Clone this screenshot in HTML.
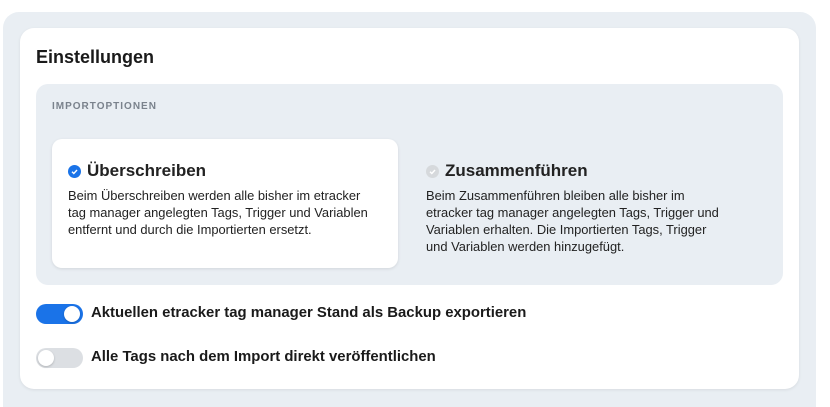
<html><head><style>
html,body{margin:0;width:830px;height:407px;overflow:hidden}
body{background:#fff;font-family:"Liberation Sans",sans-serif;color:#222;position:relative}
.outer{position:absolute;left:3px;top:12px;width:813px;height:395px;background:#e9eef3;border-radius:16px 16px 0 0}
.card{position:absolute;left:20px;top:28px;width:779px;height:361px;background:#fff;border-radius:14px;box-shadow:0 1px 3px rgba(0,0,0,.08)}
h1{position:absolute;left:16px;top:19px;margin:0;font-size:18px;font-weight:bold;color:#1a1a1a}
.inner{position:absolute;left:16px;top:56px;width:747px;height:201px;background:#e9eef3;border-radius:12px}
.lbl{position:absolute;left:16px;top:17px;font-size:10px;letter-spacing:1px;color:#7a828c;font-weight:bold}
.opt{position:absolute;top:55px;width:346px;height:129px;border-radius:10px}
.opt.sel{left:16px;background:#fff;box-shadow:0 1px 3px rgba(0,0,0,.1)}
.opt.n{left:374px}
.t{position:absolute;left:16px;top:22px;font-size:17px;font-weight:bold;display:flex;align-items:center}
.ic{width:13px;height:13px;border-radius:50%;margin-right:6px;display:inline-block;position:relative}
.d{position:absolute;left:16px;top:48px;white-space:nowrap;font-size:12.9px;line-height:17px;color:#222}
.tg{position:absolute;left:16px;width:47px;height:20px;border-radius:10px}
.tg i{position:absolute;top:2px;width:16px;height:16px;border-radius:50%;background:#fff;box-shadow:0 1px 2px rgba(0,0,0,.2)}
.tl{position:absolute;left:71px;font-size:14.9px;font-weight:bold;color:#1a1a1a}
</style></head><body>
<div class="outer"></div>
<div class="card">
<h1>Einstellungen</h1>
<div class="inner">
<div class="lbl">IMPORTOPTIONEN</div>
<div class="opt sel"><div class="t"><span class="ic" style="background:#1a73e8"><svg width="13" height="13" viewBox="0 0 13 13" style="position:absolute;left:0;top:0"><path d="M4 6.8l1.8 1.7L9 5" stroke="#fff" stroke-width="1.4" fill="none"/></svg></span>Überschreiben</div>
<div class="d">Beim Überschreiben werden alle bisher im etracker<br>tag manager angelegten Tags, Trigger und Variablen<br>entfernt und durch die Importierten ersetzt.</div></div>
<div class="opt n"><div class="t"><span class="ic" style="background:#d6d9dc"><svg width="13" height="13" viewBox="0 0 13 13" style="position:absolute;left:0;top:0"><path d="M4 6.8l1.8 1.7L9 5" stroke="#fff" stroke-width="1.4" fill="none"/></svg></span>Zusammenführen</div>
<div class="d">Beim Zusammenführen bleiben alle bisher im<br>etracker tag manager angelegten Tags, Trigger und<br>Variablen erhalten. Die Importierten Tags, Trigger<br>und Variablen werden hinzugefügt.</div></div>
</div>
<div class="tg" style="top:276px;background:#1a73e8"><i style="left:28px"></i></div>
<div class="tl" style="top:277px">Aktuellen etracker tag manager Stand als Backup exportieren</div>
<div class="tg" style="top:320px;background:#dcdfe3"><i style="left:2px"></i></div>
<div class="tl" style="top:321px">Alle Tags nach dem Import direkt veröffentlichen</div>
</div>
</body></html>
